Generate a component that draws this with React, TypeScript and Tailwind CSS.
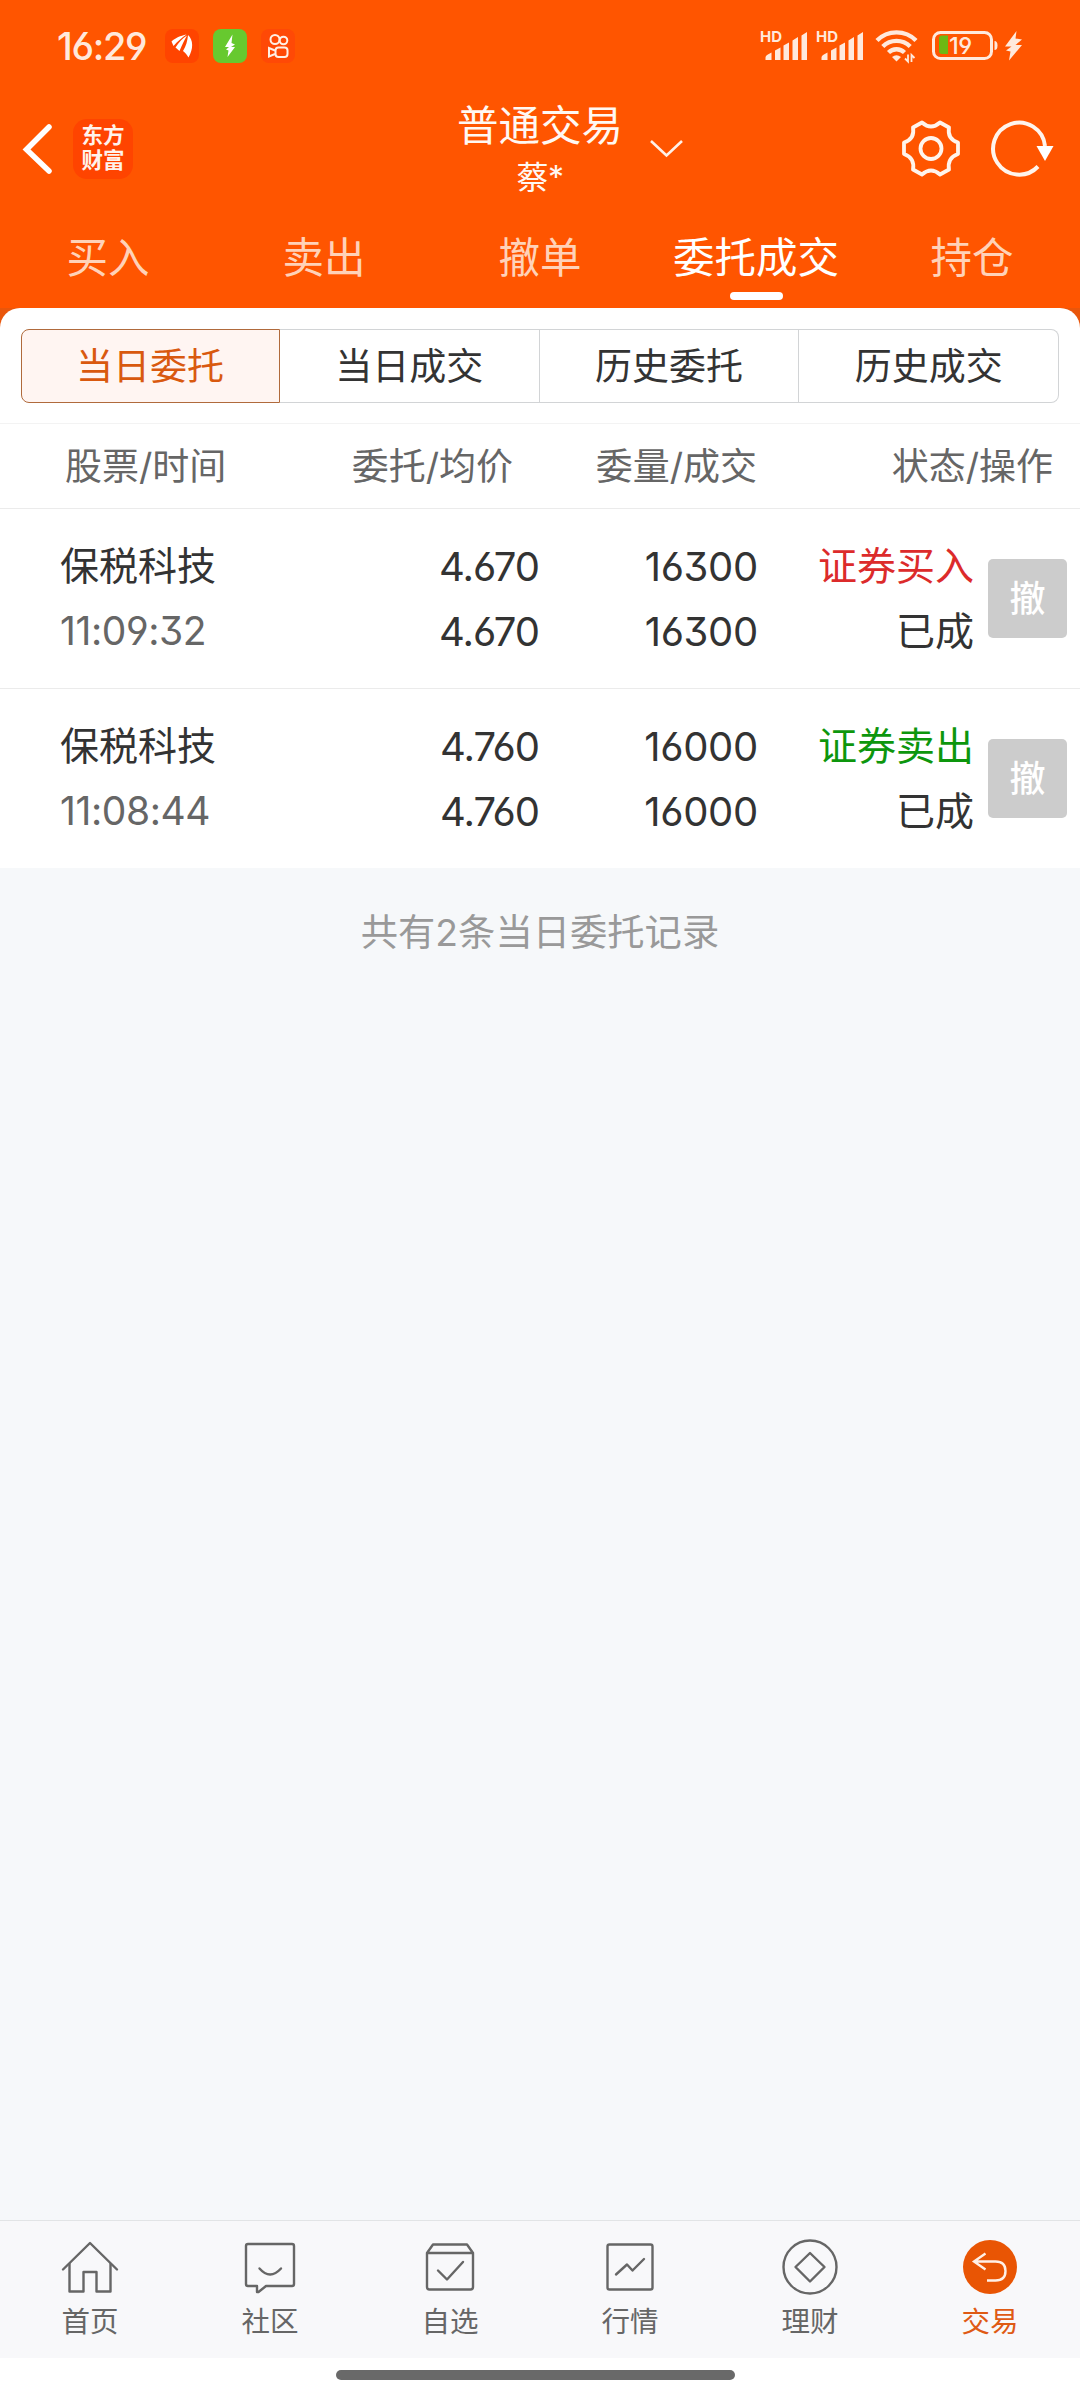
import type { FC, ReactNode } from "react";

const cjk =
	"font-['Inter','Noto_Sans_CJK_SC',sans-serif] [font-feature-settings:'cv03','cv04','cv09']";

type Order = {
	name: string;
	time: string;
	price: string;
	amount: string;
	side: string;
	sideClass: string;
};

const orders: Order[] = [
	{
		name: "保税科技",
		time: "11:09:32",
		price: "4.670",
		amount: "16300",
		side: "证券买入",
		sideClass: "text-[#dc2b2b]",
	},
	{
		name: "保税科技",
		time: "11:08:44",
		price: "4.760",
		amount: "16000",
		side: "证券卖出",
		sideClass: "text-[#0d960d]",
	},
];

const tabs = ["买入", "卖出", "撤单", "委托成交", "持仓"];
const segments = ["当日委托", "当日成交", "历史委托", "历史成交"];

const Signal: FC = () => (
	<svg className="-mt-2 -ml-1" width="52" height="42" viewBox="-4 -8 52 42" fill="#ffe9dc">
		<text x="-1" y="11.800" fontSize="15" fontWeight="700" fontFamily="Inter, sans-serif">
			HD
		</text>
		<path d="M4.500 27.500q0-1.500 1.500-2.500l4.500-2.500v7.500h-6zM14 20.500l5.500-3v12.500h-5.500zM22.500 15.500l5.500-3v17.500h-5.500zM31.500 10.500l5.500-3.500v23h-5.500zM40.500 5.500l5.500-3.500v28h-5.500z" />
	</svg>
);

const StatusBar: FC = () => (
	<div className="flex h-[100px] items-start justify-between pr-[56px] pl-[57px]">
		<div className="flex items-center pt-[29px]">
			<span className="w-[108px] text-[38px] leading-[34px] font-medium tracking-[-1.3px] text-[#ffe9dc]">
				16:29
			</span>
			<svg width="34" height="34" viewBox="0 0 34 34">
				<rect width="34" height="34" rx="8" fill="#ff4400" />
				<path
					d="M6.500 12.500C11 8.500 15 7 21.500 5.500C16.500 9 13 12 8.500 17zM10.500 18.500C14 13 17.500 9.500 22 6.500C19.500 10.500 17.500 15 14.500 22zM18 22C21 17 22.500 12 23 6C28.500 11 28.500 20 23.500 28.500C22 26 20.500 24 18 22z"
					fill="#fff"
				/>
			</svg>
			<svg className="ml-[14px]" width="34" height="34" viewBox="0 0 34 34">
				<rect width="34" height="34" rx="8" fill="#67c92f" />
				<path d="M19.500 5.500L12 18h4l-3 2.500 2.500 1-1 6.500L22 18h-4l4-2.500-3.500-1.500z" fill="#fff" />
			</svg>
			<svg className="ml-[14px]" width="34" height="34" viewBox="0 0 34 34">
				<rect width="34" height="34" rx="8" fill="#ff4906" />
				<g fill="none" stroke="#ffefe5" strokeWidth="2">
					<circle cx="14" cy="10.500" r="4.500" />
					<circle cx="22.500" cy="11.500" r="3.800" />
					<rect x="14.500" y="18.500" width="12" height="9.500" rx="3" />
					<path d="M14 21.500l-6-2.500v8.500l6-2.500" />
				</g>
			</svg>
		</div>
		<div className="flex items-start pt-[30px]">
			<Signal />
			<div className="w-2" />
			<Signal />
			<svg className="ml-[10px]" width="44" height="34" viewBox="0 0 44 34">
				<g fill="none" stroke="#ffe9dc" strokeWidth="4.400">
					<path d="M2 10.500a27.500 27.500 0 0 1 39 0" />
					<path d="M7.800 16.500a19.500 19.500 0 0 1 27.400 0" />
					<path d="M13.500 22.500a11.500 11.500 0 0 1 16 0" />
				</g>
				<path d="M17 27q4.500-3.500 9 0l-4.500 4.500z" fill="#ffe9dc" />
				<path d="M30 28.500l3 3v-7M39.500 28l-3-3v7" fill="none" stroke="#ffe9dc" strokeWidth="1.800" />
			</svg>
			<svg className="ml-[13px]" width="92" height="34" viewBox="0 0 92 34">
				<rect x="1.500" y="2.500" width="58" height="26" rx="7" fill="none" stroke="#ffe9dc" strokeWidth="3" />
				<path d="M10 5.500h6v18.500h-6q-3 0-3-3v-12.500q0-3 3-3z" fill="#6cb813" />
				<text x="17" y="23.500" fontSize="23.500" fontWeight="500" fontFamily="Inter, sans-serif" letterSpacing="-0.5" fill="#ffe9dc">
					19
				</text>
				<path d="M62.500 11q3 0 3 4.500t-3 4.500z" fill="#ffe9dc" />
				<path d="M84.500 1L73 16.500h6.500l-5.500 4 4.500 1-1.500 9L90 15h-6.500l6.500-5.500-6.500-1z" fill="#ffe9dc" />
			</svg>
		</div>
	</div>
);

const Header: FC = () => (
	<div className="flex h-[112px] items-start pr-[26px] pl-[22px]">
		<div className="flex w-[435px] items-center pt-[19px]">
			<svg width="30" height="60" viewBox="0 0 30 60" fill="none" stroke="#fff" strokeWidth="5.500">
				<path d="M27 8L4.500 30.500L27 52" strokeLinecap="round" />
			</svg>
			<div className="ml-[21px] flex h-[60px] w-[60px] flex-col items-center justify-center rounded-[14px] bg-[#ff4400] pb-[2px] text-[21.500px] leading-[25px] font-bold text-[#fff3ec]">
				<span>东方</span>
				<span>财富</span>
			</div>
		</div>
		<div className="flex flex-col items-center text-[#fff8f3]">
			<span className="mt-[1px] text-[41.500px] leading-[50px]">普通交易</span>
			<span className="mt-[2px] text-[32px] leading-[50px] tracking-[-0.5px]">蔡*</span>
		</div>
		<svg className="mt-[38px] ml-[26px]" width="36" height="20" viewBox="0 0 36 20" fill="none" stroke="#fff1e8" strokeWidth="2.600">
			<path d="M2 3L17.500 17.500L33 3" />
		</svg>
		<div className="ml-auto flex pt-[18px]">
			<svg width="62" height="62" viewBox="0 0 62 62" fill="none" stroke="#fff4ec" strokeWidth="3.800" strokeLinejoin="round">
				<circle cx="31" cy="30.500" r="10.500" />
				<path d="M22 4.500Q31 12.500 40 4.500L49 9.500Q47 21 58 24.500V36Q47 40 49 51.500L40 56.500Q31 48.500 22 56.500L13 51.500Q15 40 4 36V24.500Q15 21 13 9.500Z" />
			</svg>
			<svg className="ml-[26px]" width="66" height="62" viewBox="0 0 66 62" fill="none" stroke="#fff4ec" strokeWidth="4">
				<path d="M50 48.500A26 26 0 1 1 57 28" />
				<path d="M48.500 28h17l-8.500 15z" fill="#fff" stroke="none" />
			</svg>
		</div>
	</div>
);

const Tabs: FC = () => (
	<div className="flex h-[96px] text-[41.500px] leading-[60px]">
		{tabs.map((tab) => (
			<div key={tab} className="flex flex-1 flex-col items-center pt-[16px]">
				<span className={tab === "委托成交" ? "text-white" : "text-[#ffd2b8]"}>{tab}</span>
				{tab === "委托成交" && <div className="mt-1 h-2 w-[53px] rounded-full bg-white" />}
			</div>
		))}
	</div>
);

const Segments: FC = () => (
	<div className="mx-[21px] flex h-[74px] text-[37px] leading-[73px]">
		{segments.map((item, i) => (
			<div
				key={item}
				className={
					i === 0
						? "w-[259px] rounded-l-[8px] border border-[#b06a3c] bg-[#fff5f2] pr-px text-center text-[#d9590f]"
						: "flex-1 border-y border-r border-[#d2d4d6] text-center text-[#333] last:rounded-r-[8px]"
				}
			>
				{item}
			</div>
		))}
	</div>
);

const OrderRow: FC<{ order: Order }> = ({ order }) => (
	<div className="flex h-[180px] border-t border-[#ebebeb] text-[39px] leading-[65px] text-[#333]">
		<div className="w-[300px] pt-[24px] pl-[60px]">
			<div>{order.name}</div>
			<div className="tracking-[-0.4px] text-[#666]">{order.time}</div>
		</div>
		<div className="w-[239px] pt-[25px] text-right text-[40px] tracking-[-1px]">
			<div>{order.price}</div>
			<div>{order.price}</div>
		</div>
		<div className="w-[219px] pt-[25px] text-right text-[40px] tracking-[-0.3px]">
			<div>{order.amount}</div>
			<div>{order.amount}</div>
		</div>
		<div className="w-[216px] pt-[24px] text-right">
			<div className={order.sideClass}>{order.side}</div>
			<div>已成</div>
		</div>
		<div className="mt-[50px] ml-[14px] h-[79px] w-[79px] rounded-[5px] bg-[#ccc] text-center text-[36px] leading-[80px] font-medium text-white">
			撤
		</div>
	</div>
);

const NavItem: FC<{ label: string; active?: boolean; children: ReactNode }> = ({
	label,
	active,
	children,
}) => (
	<div
		className={
			active
				? "flex flex-1 flex-col items-center text-[#df5a14]"
				: "flex flex-1 flex-col items-center text-[#666]"
		}
	>
		<svg
			className="mt-[15px]"
			width="60"
			height="60"
			viewBox="0 0 60 60"
			fill="none"
			stroke="currentColor"
			strokeWidth="2.400"
			strokeLinecap="round"
			strokeLinejoin="round"
		>
			{children}
		</svg>
		<span className="mt-[5px] text-[28.500px] leading-[42px]">{label}</span>
	</div>
);

const BottomNav: FC = () => (
	<div className="flex h-[138px] border-t border-[#e2e4e6] bg-[#f8f8fa]">
		<NavItem label="首页">
			<path d="M3 33.500L30 7l27 26.500" />
			<path d="M9.500 28v27.500h14V36h13v19.500h14V28" />
		</NavItem>
		<NavItem label="社区">
			<path d="M8 8h44q2 0 2 2v38q0 2-2 2H26l-7.500 6H17v-6H8q-2 0-2-2V10q0-2 2-2z" />
			<path d="M19.500 32.500q10.500 12 21.500 0" />
		</NavItem>
		<NavItem label="自选">
			<path d="M7 17l6-8.500h34l6 8.500v34q0 2.500-2.500 2.500h-41Q7 53.500 7 51zM7 17h46" />
			<path d="M18 34.500l9 9L43 26" />
		</NavItem>
		<NavItem label="行情">
			<rect x="7.500" y="8.500" width="45" height="45" rx="2" />
			<path d="M16 38.500l11-10 5.500 6L44 23" />
		</NavItem>
		<NavItem label="理财">
			<circle cx="30" cy="31" r="26.500" />
			<path d="M30 17l14.500 14L30 45.500L15.500 31z" />
		</NavItem>
		<NavItem label="交易" active>
			<circle cx="30" cy="31" r="27" fill="#e95504" stroke="none" />
			<path d="M25.500 17.500L14 25.500l11.500 8M15 25.500h20.500q10 0 10 9.500t-10 9.500H27" stroke="#fff0e6" strokeLinecap="butt" strokeLinejoin="miter" />
		</NavItem>
	</div>
);

export default function App() {
	return (
		<div className={`${cjk} flex h-[2400px] w-[1080px] flex-col overflow-hidden bg-[#f6f8fa]`}>
			<div className="bg-[#ff5500]">
				<StatusBar />
				<Header />
				<Tabs />
			</div>
			<div className="bg-[#e9560b]">
				<div className="rounded-t-[20px] bg-white pt-[21px]">
					<Segments />
					<div className="mt-5 flex h-[85px] border-t border-[#f3f3f3] text-[37px] leading-[85px] text-[#666]">
						<div className="w-[300px] pl-[65px]">股票/时间</div>
						<div className="w-[213px] text-right">委托/均价</div>
						<div className="w-[244px] text-right">委量/成交</div>
						<div className="w-[296px] text-right">状态/操作</div>
					</div>
					{orders.map((order) => (
						<OrderRow key={order.time} order={order} />
					))}
				</div>
			</div>
			<div className="flex-1 pt-[33px] text-center text-[37.300px] leading-[64px] text-[#999]">
				共有2条当日委托记录
			</div>
			<BottomNav />
			<div className="h-[42px] bg-white pt-[12px] pl-[336px]">
				<div className="h-[10px] w-[399px] rounded-full bg-[#696969]" />
			</div>
		</div>
	);
}
